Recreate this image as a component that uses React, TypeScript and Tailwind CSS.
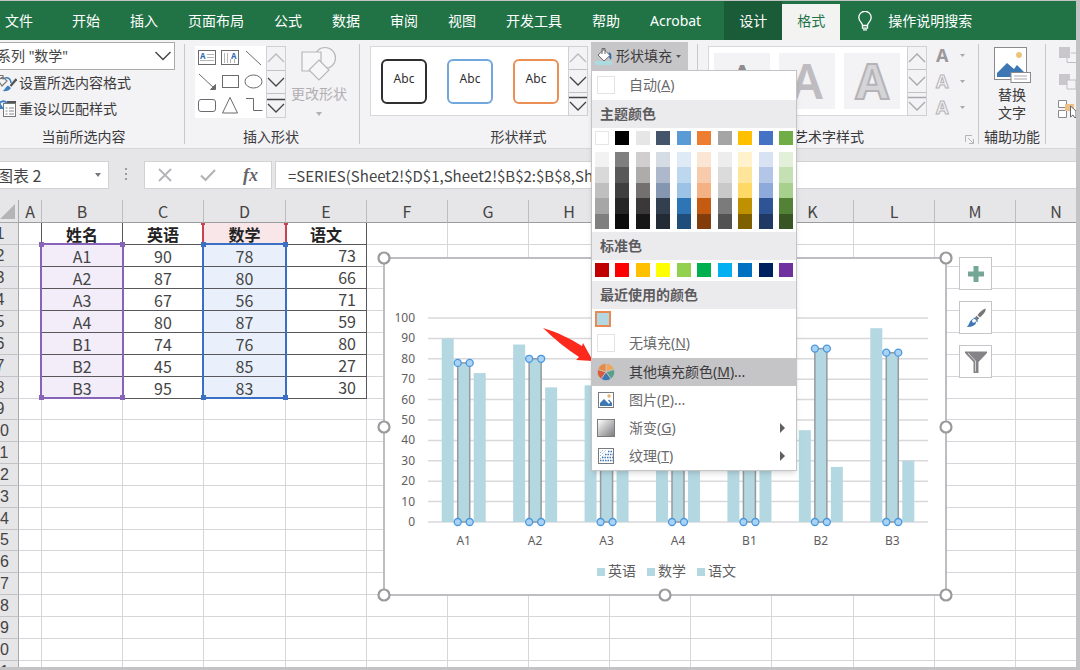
import type { ReactNode } from "react";
import { clsx } from "clsx";

const TABS = ["开始", "插入", "页面布局", "公式", "数据", "审阅", "视图", "开发工具", "帮助", "Acrobat"];

const COLUMNS = ["A", "B", "C", "D", "E", "F", "G", "H", "I", "J", "K", "L", "M", "N"];

const SCORES = [
    { name: "A1", english: 90, math: 78, chinese: 73 },
    { name: "A2", english: 87, math: 80, chinese: 66 },
    { name: "A3", english: 67, math: 56, chinese: 71 },
    { name: "A4", english: 80, math: 87, chinese: 59 },
    { name: "B1", english: 74, math: 76, chinese: 80 },
    { name: "B2", english: 45, math: 85, chinese: 27 },
    { name: "B3", english: 95, math: 83, chinese: 30 },
];

const THEME_COLORS = [
    { base: "#ffffff", shades: ["#f2f2f2", "#d9d9d9", "#bfbfbf", "#a6a6a6", "#7f7f7f"] },
    { base: "#000000", shades: ["#7f7f7f", "#595959", "#3f3f3f", "#262626", "#0c0c0c"] },
    { base: "#e7e6e6", shades: ["#d0cece", "#aeabab", "#757070", "#3a3838", "#171616"] },
    { base: "#44546a", shades: ["#d6dce4", "#adb9ca", "#8496b0", "#323f4f", "#222a35"] },
    { base: "#5b9bd5", shades: ["#deebf6", "#bdd7ee", "#9cc3e5", "#2e75b5", "#1e4e79"] },
    { base: "#ed7d31", shades: ["#fbe5d5", "#f7cbac", "#f4b183", "#c55a11", "#833c0b"] },
    { base: "#a5a5a5", shades: ["#ededed", "#dbdbdb", "#c9c9c9", "#7b7b7b", "#525252"] },
    { base: "#ffc000", shades: ["#fff2cc", "#fee599", "#ffd965", "#bf9000", "#7f6000"] },
    { base: "#4472c4", shades: ["#d9e2f3", "#b4c6e7", "#8eaadb", "#2f5496", "#1f3864"] },
    { base: "#70ad47", shades: ["#e2efd9", "#c5e0b3", "#a8d08d", "#538135", "#375623"] },
];

const STANDARD_COLORS = [
    "#c00000", "#ff0000", "#ffc000", "#ffff00", "#92d050",
    "#00b050", "#00b0f0", "#0070c0", "#002060", "#7030a0",
];

function TitleTabs() {
    return (
        <nav className="flex h-[39px] shrink-0 items-stretch overflow-hidden bg-[#217346] text-sm whitespace-nowrap text-white">
            <button className="pr-6 pl-[5px]">文件</button>
            {TABS.map((tab) => (
                <button key={tab} className="px-[15px]">
                    {tab}
                </button>
            ))}
            <button className="ml-2 bg-[#1b5c38] px-[15px]">设计</button>
            <button className="mt-[3px] bg-[#f3f4f2] px-[15px] pb-[3px] text-[#217346]">格式</button>
            <button className="ml-[18px] flex items-center gap-4">
                <svg className="h-5 w-[14px]" viewBox="0 0 14 20" fill="none" stroke="currentColor" strokeWidth="1.3">
                    <path d="M4.5 14.5c0-3-3.7-4-3.7-8a6.2 6.2 0 0 1 12.4 0c0 4-3.7 5-3.7 8z" />
                    <path d="M4.5 14.5v2.6h5v-2.6M5 18.9h4" />
                </svg>
                操作说明搜索
            </button>
        </nav>
    );
}

function RibbonGroup({ label, className, labelClassName, children }: {
    label: string;
    className?: string;
    labelClassName?: string;
    children?: ReactNode;
}) {
    return (
        <section className={clsx("relative my-1 flex shrink-0 flex-col justify-between border-r border-[#c9c8ca]", className)}>
            <div className="flex items-start">{children}</div>
            <h2 className={clsx("text-center text-sm leading-[14px] whitespace-nowrap text-[#3b3a3c]", labelClassName)}>{label}</h2>
        </section>
    );
}

/** Up / down / more buttons at the right edge of a gallery. */
function GalleryScroller({ dim }: { dim?: boolean }) {
    const ink = dim ? "#a9a7ab" : "#444346";
    return (
        <div className="flex w-5 flex-col border border-[#d0cfd2] bg-[#f3f2f4]">
            <button aria-label="上一行" className="flex flex-1 items-center justify-center">
                <svg className="h-3 w-[18px]" viewBox="0 0 18 12" fill="none" stroke={dim ? "#a9a7ab" : "#bcbabe"} strokeWidth="1.3">
                    <path d="M1 10l8-8 8 8" />
                </svg>
            </button>
            <button aria-label="下一行" className="flex flex-1 items-center justify-center border-y border-[#c3c1c5]">
                <svg className="h-3 w-[18px]" viewBox="0 0 18 12" fill="none" stroke={ink} strokeWidth="1.3">
                    <path d="M1 2l8 8 8-8" />
                </svg>
            </button>
            <button aria-label="其他" className="flex flex-1 items-center justify-center">
                <svg className="h-4 w-[18px]" viewBox="0 0 18 16" fill="none" stroke={ink} strokeWidth="1.3">
                    <path d="M0 1.5h18M1 6l8 8 8-8" />
                </svg>
            </button>
        </div>
    );
}

function SelectionGroup() {
    return (
        <RibbonGroup label="当前所选内容" className="w-[185px] pr-[9px]" labelClassName="pr-2">
            <div className="w-full">
                <div className="relative -mt-[2px] -ml-2 h-7">
                    <select aria-label="图表元素" className="h-full w-full appearance-none border border-[#ababab] bg-white pl-1 text-sm text-[#444]">
                        <option>系列 "数学"</option>
                    </select>
                    <svg className="pointer-events-none absolute top-2 right-[3px] h-3 w-[18px]" viewBox="0 0 18 12" fill="none" stroke="#444" strokeWidth="1.4">
                        <path d="M1.5 2L9 9.500l7.500-7.500" />
                    </svg>
                </div>
                <button className="flex h-[26px] items-center gap-[2px] text-sm whitespace-nowrap text-[#3b3a3c]">
                    <svg className="h-[18px] w-[17px]" viewBox="0 0 17 18" fill="none">
                        <path d="M0 1.500h3v4M-2 6l5-3 4 4-5 5z" stroke="#777" strokeWidth="1.2" />
                        <path d="M5 4c3-1 6 1 6 5" stroke="#3f7fc1" strokeWidth="1.6" />
                        <path d="M16.500 5l-6 7" stroke="#555" strokeWidth="2.4" />
                        <path d="M2 17c3-.5 3-4 6-5.500l3 2.500c-2 3-5 3.500-9 3z" fill="#3f7fc1" />
                    </svg>
                    设置所选内容格式
                </button>
                <button className="flex h-[26px] items-center gap-[2px] text-sm whitespace-nowrap text-[#3b3a3c]">
                    <svg className="h-[18px] w-[17px]" viewBox="0 0 17 18" fill="none">
                        <rect x="3.500" y="3.500" width="12" height="13" fill="#fff" stroke="#777" />
                        <path d="M7 2h9" stroke="#555" strokeWidth="2" />
                        <path d="M5.500 8h2M5.500 11h2M5.500 14h2M9 8h5M9 11h5M9 14h5" stroke="#888" />
                        <path d="M-1 5c1-4 5-5 8-2" stroke="#3f7fc1" strokeWidth="1.800" />
                        <path d="M0 3v6h4z" fill="#3f7fc1" />
                    </svg>
                    重设以匹配样式
                </button>
            </div>
        </RibbonGroup>
    );
}

function InsertShapesGroup() {
    return (
        <RibbonGroup label="插入形状" className="w-[175px] pl-[10px]" labelClassName="pr-3">
            <div className="mt-[2px] flex h-[72px]">
                <svg className="h-full w-[71px] bg-white" viewBox="0 0 71 72" fill="none" stroke="#6b6a6d" strokeWidth="1">
                    <rect x="3.500" y="4.500" width="17" height="14" />
                    <text x="5" y="13" fontSize="8" fontWeight="700" fill="#2f6fb5" stroke="none">A</text>
                    <path d="M12 8.500h7M12 11.500h7M5 14.500h14" stroke="#b5b4b8" />
                    <rect x="26.500" y="4.500" width="17" height="14" />
                    <text x="36" y="13" fontSize="8" fontWeight="700" fill="#2f6fb5" stroke="none">A</text>
                    <path d="M29.500 7v10M32.500 7v10M35.500 13v4M39.500 13v4" stroke="#b5b4b8" />
                    <path d="M51 5l15 14" />
                    <path d="M4 28l16 15" />
                    <path d="M20.500 38.500v5h-5z" fill="#6b6a6d" />
                    <rect x="27.500" y="29.500" width="16" height="12" />
                    <ellipse cx="58.500" cy="35.500" rx="8.500" ry="6.500" />
                    <rect x="3.500" y="53.500" width="17" height="12" rx="2.500" />
                    <path d="M35 51.500l7.500 15.500h-15zM51 52.500h7.500v12h9" />
                </svg>
                <GalleryScroller />
            </div>
            <button className="ml-[5px] flex flex-col items-center text-sm whitespace-nowrap text-[#b1afb3]">
                <svg className="mt-[2px] h-[37px] w-9" viewBox="0 0 36 37" fill="#f6f5f7" stroke="#b8b6ba" strokeWidth="1.2">
                    <circle cx="24" cy="12" r="10.500" />
                    <path d="M1 6h19v19H1z" />
                    <path d="M18 14l10 10-10 10L8 24z" />
                </svg>
                <span className="mt-px leading-5">更改形状</span>
                <svg className="mt-2 h-1 w-[6px]" viewBox="0 0 6 4" fill="#b1afb3"><path d="M0 0h6L3 4z" /></svg>
            </button>
        </RibbonGroup>
    );
}

function PictureIcon({ className }: { className?: string }) {
    return (
        <svg className={className} viewBox="0 0 18 18" fill="none">
            <rect x="1.500" y="1.500" width="15" height="15" fill="#fff" stroke="#7a797c" />
            <circle cx="12" cy="5" r="1.700" fill="#eab06b" />
            <path d="M3 15v-3l4-4 5 5 1-1.500-2-2 1-1 3 3.500v3z" fill="#3d78b4" />
        </svg>
    );
}

function SectionTitle({ children }: { children: ReactNode }) {
    return <h3 className="flex h-7 items-center bg-[#ebeaec] pl-2 text-sm font-bold text-[#5c5b5e]">{children}</h3>;
}

function BlankBox() {
    return <span className="h-[18px] w-[18px] border border-[#e3e2e5] bg-white" />;
}

function MenuItem({ icon, label, hotkey, tail, active, submenu }: {
    icon: ReactNode;
    label: string;
    hotkey: string;
    tail?: string;
    active?: boolean;
    submenu?: boolean;
}) {
    return (
        <button
            role="menuitem"
            className={clsx(
                "flex h-7 w-full items-center gap-[14px] pl-[5px] text-left text-sm whitespace-nowrap",
                active ? "bg-[#c5c4c6] text-[#3b3a3c]" : "text-[#6a696c]",
            )}
        >
            {icon}
            <span>
                {label}(<u>{hotkey}</u>){tail}
            </span>
            {submenu && (
                <svg className="mr-[11px] ml-auto h-[10px] w-[5px]" viewBox="0 0 5 10" fill="#5f5e61"><path d="M0 0l5 5-5 5z" /></svg>
            )}
        </button>
    );
}

function FillMenu() {
    return (
        <div role="menu" className="absolute top-full left-0 z-30 w-[206px] border border-[#c4c3c6] bg-white shadow-md">
            <div className="pb-px">
                <MenuItem icon={<BlankBox />} label="自动" hotkey="A" />
            </div>
            <SectionTitle>主题颜色</SectionTitle>
            <div className="flex justify-between px-[3px] py-[3px]">
                {THEME_COLORS.map(({ base, shades }) => (
                    <div key={base} className="w-[14px]">
                        <button aria-label={base} className={clsx("block h-[14px] w-full", base === "#ffffff" && "border border-[#e6e5e8]")} style={{ backgroundColor: base }} />
                        <div className="mt-[7px] grid h-[77px] grid-rows-5">
                            {shades.map((shade) => (
                                <button key={shade} aria-label={shade} style={{ backgroundColor: shade }} />
                            ))}
                        </div>
                    </div>
                ))}
            </div>
            <SectionTitle>标准色</SectionTitle>
            <div className="flex justify-between px-[3px] pt-[3px] pb-1">
                {STANDARD_COLORS.map((color) => (
                    <button key={color} aria-label={color} className="h-[14px] w-[14px]" style={{ backgroundColor: color }} />
                ))}
            </div>
            <SectionTitle>最近使用的颜色</SectionTitle>
            <div className="px-[3px] py-[2px]">
                <button aria-label="最近使用的颜色 1" className="block h-4 w-4 border-2 border-[#e98a55] bg-[#b4d8e2]" />
            </div>
            <div className="pb-px">
                <MenuItem icon={<BlankBox />} label="无填充" hotkey="N" />
            </div>
            <MenuItem
                active
                label="其他填充颜色"
                hotkey="M"
                tail="..."
                icon={
                    <svg className="h-[18px] w-[18px]" viewBox="0 0 18 18" stroke="#c5c4c6" strokeWidth="0.800">
                        <path d="M9 9V0.500a8.500 8.500 0 0 1 8.100 5.900z" fill="#efa55a" />
                        <path d="M9 9l8.100-2.600a8.500 8.500 0 0 1-3.100 9.500z" fill="#58a08c" />
                        <path d="M9 9l5 6.900a8.500 8.500 0 0 1-10 0z" fill="#3d78b4" />
                        <path d="M9 9l-5 6.900a8.500 8.500 0 0 1-3.100-9.500z" fill="#d95b3c" />
                        <path d="M9 9L.9 6.400A8.500 8.500 0 0 1 9 .5z" fill="#e78a45" />
                    </svg>
                }
            />
            <MenuItem icon={<PictureIcon className="h-[18px] w-[18px]" />} label="图片" hotkey="P" tail="..." />
            <MenuItem
                submenu
                label="渐变"
                hotkey="G"
                icon={<span className="h-[18px] w-[18px] border border-[#7a797c] bg-linear-to-br from-white to-[#7e7d80]" />}
            />
            <MenuItem
                submenu
                label="纹理"
                hotkey="T"
                icon={
                    <svg className="h-[18px] w-[18px]" viewBox="0 0 18 18" fill="none">
                        <rect x="1.500" y="1.500" width="15" height="15" fill="#fff" stroke="#7a797c" />
                        <path d="M3 13.500h13M5 10.500h11M8 7.500h8M11 4.500h5" stroke="#3d78b4" strokeWidth="1.500" strokeDasharray="1.500 1" />
                        <path d="M3 6l3-3M3 9l6-6M3 12l4-4" stroke="#8fb4dc" strokeDasharray="1.500 1" />
                    </svg>
                }
            />
        </div>
    );
}

function ShapeStylesGroup() {
    const outlines = ["border-[#2f2e31]", "border-[#72a7dc]", "border-[#ec8f54]"];
    return (
        <RibbonGroup label="形状样式" className="w-[338px] pr-[10px] pl-[10px]" labelClassName="pr-5">
            <div className="mt-[2px] flex h-[70px]">
                <div className="flex w-[198px] items-center gap-5 border border-r-0 border-[#d8d7da] bg-white pl-[10px]">
                    {outlines.map((outline) => (
                        <button key={outline} className={clsx("h-[45px] w-[46px] rounded-md border-2 pb-1 text-xs text-[#2f2e31]", outline)}>
                            Abc
                        </button>
                    ))}
                </div>
                <GalleryScroller />
            </div>
            <div className="relative -mt-[2px] ml-[3px]">
                <button className="flex h-7 w-[97px] items-center gap-1 bg-[#c6c5c7] pl-1 text-sm whitespace-nowrap text-[#3b3a3c]">
                    <svg className="h-[18px] w-[17px] shrink-0" viewBox="0 0 17 18" fill="none">
                        <rect x="0" y="14" width="17" height="4" fill="#a9dbe0" />
                        <path d="M14 5c2 1 3 3 2 8l-3-4z" fill="#2f6fb5" />
                        <path d="M3 8l6-5.500 6 6-6 5.500z" fill="#fff" stroke="#6b6a6d" />
                        <path d="M7 7V1.500h3V7" stroke="#6b6a6d" />
                    </svg>
                    形状填充
                    <svg className="h-[3px] w-[5px] shrink-0" viewBox="0 0 5 3" fill="#555"><path d="M0 0h5L2.500 3z" /></svg>
                </button>
                <FillMenu />
            </div>
        </RibbonGroup>
    );
}

function WordArtGroup() {
    const effects = ["text-[#9b999d]", "text-[#f3f2f4] [-webkit-text-stroke:1px_#b5b3b7]", "text-[#f3f2f4] [-webkit-text-stroke:1px_#b5b3b7]"];
    return (
        <RibbonGroup label="艺术字样式" className="w-[281px] pr-5 pl-[10px]" labelClassName="pr-2">
            <div className="mt-[2px] flex h-[70px]">
                <div className="flex w-[199px] items-center gap-[9px] border border-r-0 border-[#d8d7da] bg-white pl-[5px] text-5xl leading-none">
                    <button className="h-14 w-14 bg-[#f3f2f4] text-[#8f8d91]">A</button>
                    <button className="h-14 w-14 bg-[#f3f2f4] font-semibold text-[#bebcc0]">A</button>
                    <button className="h-14 w-14 bg-[#f3f2f4] font-bold text-[#d5d4d7] [-webkit-text-stroke:2px_#b5b3b7]">A</button>
                </div>
                <GalleryScroller dim />
            </div>
            <div className="-mt-[2px] ml-[9px] flex flex-col">
                {effects.map((effect, i) => (
                    <button key={i} className="flex h-[26px] items-center gap-3 text-lg leading-none font-bold">
                        <span className={effect}>A</span>
                        <svg className="h-[3px] w-[5px]" viewBox="0 0 5 3" fill="#a9a7ab"><path d="M0 0h5L2.500 3z" /></svg>
                    </button>
                ))}
            </div>
            <button aria-label="设置文本效果格式" className="absolute right-1 bottom-0">
                <svg className="h-[9px] w-[9px]" viewBox="0 0 9 9" fill="none" stroke="#b5b3b7">
                    <path d="M.5 7V.5H7M3 3l5 5M8.500 4v4.500H4" />
                </svg>
            </button>
        </RibbonGroup>
    );
}

function AltTextGroup() {
    return (
        <RibbonGroup label="辅助功能" className="w-[67px]">
            <button className="flex w-full flex-col items-center text-sm leading-[18px] text-[#3b3a3c]">
                <svg className="mt-[2px] mb-[3px] h-[37px] w-[38px]" viewBox="0 0 38 37" fill="none">
                    <rect x="1.500" y="1.500" width="32" height="32" fill="#fff" stroke="#8a898c" />
                    <circle cx="26" cy="9" r="3" fill="#ecc37c" />
                    <path d="M4 31v-4l10-10 7 6 3-4 8 8v4z" fill="#3d78b4" />
                    <rect x="18" y="26.500" width="19.500" height="10" fill="#fff" stroke="#8a898c" />
                    <path d="M21 30h13M21 33h13" stroke="#a9a8ab" />
                </svg>
                <span>替换</span>
                <span>文字</span>
            </button>
        </RibbonGroup>
    );
}

function ArrangeGroup() {
    return (
        <div className="my-1 flex flex-col pl-3">
            <svg className="mt-[3px] h-[72px] w-[18px]" viewBox="0 0 18 72" fill="none">
                <path d="M1 0h11v11H1zM1 27h11v11H1z" fill="#c9c7cb" />
                <path d="M13 6h5M9 11v4.500h9M9 33h9v9H9z" fill="#f3f2f4" stroke="#c0bec2" />
                <path d="M.5 53.500h8v7h-8zM.5 63.500h8v7h-8z" fill="#fff" stroke="#8a898c" />
                <path d="M7 57h9v7H7z" fill="#edc08a" />
                <path d="M12.500 59v11l2.500-2 2 3 1-1v-6z" fill="#fff" stroke="#666" />
            </svg>
        </div>
    );
}

function FormulaBar() {
    return (
        <div className="flex shrink-0 bg-[#e6e5e7] pt-3 pb-[11px] font-['Noto_Sans_CJK_SC',sans-serif] text-[#444]">
            <div className="relative -ml-2 h-7 w-[117px]">
                <input aria-label="名称框" defaultValue="图表 2" className="h-full w-full border border-[#d2d1d4] bg-white pl-1 text-base" />
                <svg className="pointer-events-none absolute top-3 right-2 h-1 w-[6px]" viewBox="0 0 6 4" fill="#77767a"><path d="M0 0h6L3 4z" /></svg>
            </div>
            <svg className="mx-4 h-7 w-[3px]" viewBox="0 0 3 28" fill="#9b9a9d">
                <path d="M0 7h2v2H0zM0 12h2v2H0zM0 17h2v2H0z" />
            </svg>
            <div className="flex h-7 w-32 items-center justify-between border border-[#d2d1d4] bg-white px-[13px]">
                <button aria-label="取消">
                    <svg className="h-[14px] w-[14px]" viewBox="0 0 14 14" fill="none" stroke="#b5b3b7" strokeWidth="1.800"><path d="M1 1l12 12M13 1L1 13" /></svg>
                </button>
                <button aria-label="输入">
                    <svg className="h-[14px] w-4" viewBox="0 0 16 14" fill="none" stroke="#b5b3b7" strokeWidth="2.200"><path d="M1 7.500l4.500 4.500L15 2" /></svg>
                </button>
                <button className="font-['Liberation_Serif',serif] text-lg leading-none font-bold text-[#66656a] italic">fx</button>
            </div>
            <input
                aria-label="编辑栏"
                defaultValue="=SERIES(Sheet2!$D$1,Sheet2!$B$2:$B$8,Sheet2!$D$2:$D$8,2)"
                className="ml-[3px] h-7 min-w-0 flex-1 border border-r-0 border-[#d2d1d4] bg-white pl-3 text-[15px]"
            />
        </div>
    );
}

/** Coloured frame round a seven-row range, anchored in the range's first cell. */
function RangeFrame({ tone }: { tone: "purple" | "blue" }) {
    const fill = tone === "purple" ? "bg-[#8764b8]" : "bg-[#3a6fc4]";
    return (
        <span className={clsx("pointer-events-none absolute -top-[2px] -right-[2px] -left-[2px] z-10 h-[156px] border-2", tone === "purple" ? "border-[#8764b8]" : "border-[#3a6fc4]")}>
            <i className={clsx("absolute -top-[3px] -left-[3px] h-[5px] w-[5px]", fill)} />
            <i className={clsx("absolute -top-[3px] -right-[3px] h-[5px] w-[5px]", fill)} />
            <i className={clsx("absolute -bottom-[3px] -left-[3px] h-[5px] w-[5px]", fill)} />
            <i className={clsx("absolute -right-[3px] -bottom-[3px] h-[5px] w-[5px]", fill)} />
        </span>
    );
}

function cellContent(row: number, column: string): ReactNode {
    if (row === 1) {
        return { B: "姓名", C: "英语", D: "数学", E: "语文" }[column];
    }
    const score = SCORES[row - 2];
    if (!score) return null;
    return { B: score.name, C: score.english, D: score.math, E: score.chinese }[column];
}

function Cell({ row, column }: { row: number; column: string }) {
    const inTable = row <= 8 && "BCDE".includes(column);
    const filled = row > 1 && inTable;
    return (
        <td
            className={clsx(
                "relative border-r border-b p-0 leading-5",
                inTable ? "border-[#58575a]" : "border-[#d6d5da]",
                row === 1 && column === "A" && "border-r-[#58575a]",
                row === 1 && "font-bold text-[#222]",
                filled && column === "E" ? "pr-[10px] pb-[2px] text-right leading-[18px]" : "text-center",
                filled && column === "B" && "bg-[#f2edf8]",
                filled && column === "D" && "bg-[#e9f0fb]",
                row === 1 && column === "D" && "bg-[#f9e6e8]",
            )}
        >
            {cellContent(row, column)}
            {row === 2 && column === "B" && <RangeFrame tone="purple" />}
            {row === 2 && column === "D" && <RangeFrame tone="blue" />}
            {row === 1 && column === "D" && (
                <span className="pointer-events-none absolute -inset-x-[2px] top-0 bottom-[2px] z-10 border-x-2 border-[#c9434f]">
                    <i className="absolute top-0 -left-[3px] h-[2px] w-1 bg-[#c9434f]" />
                    <i className="absolute top-0 -right-[3px] h-[2px] w-1 bg-[#c9434f]" />
                </span>
            )}
        </td>
    );
}

function Grid() {
    const rows = Array.from({ length: 21 }, (_, i) => i + 1);
    return (
        <table className="-ml-[18px] w-full min-w-[1115px] table-fixed border-separate border-spacing-0 font-['Noto_Sans_CJK_SC',sans-serif] text-base text-[#444]">
            <thead>
                <tr className="h-[23px] bg-[#e6e5e7]">
                    <th className="w-[37px] border-r border-b border-[#a9a8ab] p-0">
                        <svg className="mr-[3px] ml-auto h-[15px] w-[15px]" viewBox="0 0 15 15" fill="#b5b4b7"><path d="M15 0v15H0z" /></svg>
                    </th>
                    {COLUMNS.map((column) => (
                        <th
                            key={column}
                            className={clsx(
                                "border-r border-b border-r-[#bdbcbf] border-b-[#9c9b9e] p-0 leading-[22px] font-normal",
                                column === "A" ? "w-[23px]" : column === "D" || column === "K" ? "w-[82px]" : "w-[81px]",
                            )}
                        >
                            {column}
                        </th>
                    ))}
                </tr>
            </thead>
            <tbody>
                {rows.map((row) => (
                    <tr key={row} className={row === 9 || row === 15 ? "h-[21px]" : "h-[22px]"}>
                        <th className="border-r border-b border-r-[#a9a8ab] border-b-[#c3c2c5] bg-[#e6e5e7] p-0 font-['Liberation_Sans',sans-serif] leading-5 font-normal">
                            {row}
                        </th>
                        {COLUMNS.map((column) => (
                            <Cell key={column} row={row} column={column} />
                        ))}
                    </tr>
                ))}
            </tbody>
        </table>
    );
}

const PLOT = { left: 52, right: 552, top: 68, bottom: 272 };

function Chart() {
    const step = (PLOT.right - PLOT.left) / SCORES.length;
    const y = (value: number) => PLOT.bottom - ((PLOT.bottom - PLOT.top) * value) / 100;
    const handles = [[8, 8], [289, 8], [570, 8], [8, 177], [570, 177], [8, 345], [289, 345], [570, 345]];
    return (
        <svg className="absolute top-[50px] left-[376px] z-10 h-[353px] w-[578px]" viewBox="0 0 578 353" fill="#5f5e61">
            <rect x="8" y="8" width="562" height="337" fill="#fff" stroke="#bfbdc1" strokeWidth="2" />
            {Array.from({ length: 11 }, (_, i) => i * 10).map((tick) => (
                <g key={tick}>
                    <path d={`M${PLOT.left} ${y(tick)}H${PLOT.right}`} stroke="#d9d8db" strokeWidth="1.500" />
                    <text x="39" y={y(tick) + 4} fontSize="12" textAnchor="end">{tick}</text>
                </g>
            ))}
            {SCORES.map((score, i) => {
                const center = PLOT.left + step * (i + 0.5);
                return (
                    <g key={score.name}>
                        <rect x={center - 22} y={y(score.english)} width="12" height={PLOT.bottom - y(score.english)} fill="#b4d8e2" />
                        <rect x={center - 6} y={y(score.math)} width="12" height={PLOT.bottom - y(score.math)} fill="#b4d8e2" stroke="#949a9e" strokeWidth="1.500" />
                        <rect x={center + 10} y={y(score.chinese)} width="12" height={PLOT.bottom - y(score.chinese)} fill="#b4d8e2" />
                        <g fill="#a9d2f5" stroke="#4a98dc" strokeWidth="1.300">
                            <circle cx={center - 6} cy={y(score.math)} r="3.500" />
                            <circle cx={center + 6} cy={y(score.math)} r="3.500" />
                            <circle cx={center - 6} cy={PLOT.bottom} r="3.500" />
                            <circle cx={center + 6} cy={PLOT.bottom} r="3.500" />
                        </g>
                        <text x={center} y="295" fontSize="12" textAnchor="middle">{score.name}</text>
                    </g>
                );
            })}
            {["英语", "数学", "语文"].map((name, i) => (
                <g key={name}>
                    <rect x={221 + i * 50} y="318" width="8" height="8" fill="#b4d8e2" />
                    <text x={232 + i * 50} y="326" fontSize="14">{name}</text>
                </g>
            ))}
            {handles.map(([cx, cy]) => (
                <circle key={`${cx}-${cy}`} cx={cx} cy={cy} r="5.500" fill="#fff" stroke="#9a999c" strokeWidth="2.200" />
            ))}
        </svg>
    );
}

function ChartButtons() {
    const frame = "flex h-[33px] w-[33px] items-center justify-center border border-[#c6c4c8] bg-white";
    return (
        <div className="absolute top-[57px] left-[959px] z-10 flex flex-col gap-[11px]">
            <button aria-label="图表元素" className={frame}>
                <svg className="h-4 w-4" viewBox="0 0 16 16" fill="#74a795"><path d="M5.500 0h5v5.500H16v5h-5.500V16h-5v-5.500H0v-5h5.500z" /></svg>
            </button>
            <button aria-label="图表样式" className={frame}>
                <svg className="h-5 w-5" viewBox="0 0 20 20">
                    <path d="M19.500 0.500c1 3-2.500 6-5.500 9l-2.500-2.500c2.500-3 5-5.500 8-6.500z" fill="#77767a" />
                    <path d="M13.200 10.200L10.600 7.700 9 9.500l2.500 2.500z" fill="#77767a" />
                    <path d="M7.500 10.500c2-.5 4 1.500 3.500 3.500" fill="#fff" stroke="#3d78b4" strokeWidth="1.300" />
                    <path d="M.5 19c2.500-.5 2.500-6 6-8 1.500.5 3.500 2 3.500 4-1.500 3.500-5.500 4-9.500 4z" fill="#3d78b4" />
                    <circle cx="7.800" cy="13" r="1.800" fill="#fff" />
                </svg>
            </button>
            <button aria-label="图表筛选器" className={frame}>
                <svg className="h-[22px] w-[22px]" viewBox="0 0 22 22">
                    <path d="M0 .5h22v1.500L13.500 11v11h-5V11L0 2z" fill="#858387" />
                    <path d="M3 2l7.500 8v10.500" fill="none" stroke="#dedde0" strokeWidth="0.900" />
                </svg>
            </button>
        </div>
    );
}

export default function App() {
    return (
        <div className="relative flex h-screen flex-col overflow-hidden border-t border-r-4 border-b-3 border-[#c3c2c4] bg-white font-['Noto_Sans','Noto_Sans_CJK_SC',sans-serif]">
            <TitleTabs />
            <div className="relative z-20 flex h-[109px] shrink-0 border-b border-[#d5d4d7] bg-[#f3f2f4]">
                <SelectionGroup />
                <InsertShapesGroup />
                <ShapeStylesGroup />
                <WordArtGroup />
                <AltTextGroup />
                <ArrangeGroup />
            </div>
            <FormulaBar />
            <main className="relative min-h-0 flex-1 overflow-hidden">
                <Grid />
                <Chart />
                <ChartButtons />
                {/* Pointer to the highlighted menu entry */}
                <svg className="absolute top-[127px] left-[542px] z-10 h-9 w-[52px]" viewBox="0 0 52 36" fill="#fb2a1c">
                    <path d="M1 1c14 4 28 11 39 18l1-3 10 18-17-1 3-3C25 22 12 12 1 1z" />
                </svg>
            </main>
        </div>
    );
}
